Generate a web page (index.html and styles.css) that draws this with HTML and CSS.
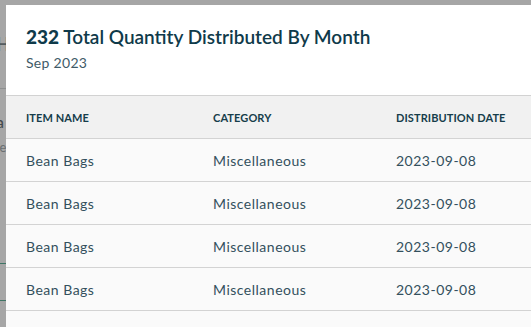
FILE: index.html
```html
<!DOCTYPE html>
<html>
<head>
<meta charset="utf-8">
<link rel="stylesheet" href="styles.css">
</head>
<body>
<div class="page">
  <div class="bg-h">H</div>
  <div class="bg-rule"></div>
  <div class="bg-a">a</div>
  <div class="bg-re">re</div>
  <div class="bg-green g1"></div>
  <div class="bg-green g2"></div>
</div>
<div class="modal">
  <div class="modal-head">
    <h1 class="title"><strong>232</strong> Total Quantity Distributed By Month</h1>
    <div class="subtitle">Sep 2023</div>
  </div>
  <table class="grid">
    <thead>
      <tr><th class="c1">Item Name</th><th class="c2">Category</th><th>Distribution Date</th></tr>
    </thead>
    <tbody>
      <tr><td>Bean Bags</td><td>Miscellaneous</td><td>2023-09-08</td></tr>
      <tr><td>Bean Bags</td><td>Miscellaneous</td><td>2023-09-08</td></tr>
      <tr><td>Bean Bags</td><td>Miscellaneous</td><td>2023-09-08</td></tr>
      <tr><td>Bean Bags</td><td>Miscellaneous</td><td>2023-09-08</td></tr>
      <tr><td>Bean Bags</td><td>Miscellaneous</td><td>2023-09-08</td></tr>
    </tbody>
  </table>
</div>
</body>
</html>
```
FILE: styles.css
```css
html, body {
  margin: 0;
  padding: 0;
  width: 531px;
  height: 327px;
  overflow: hidden;
  background: #a6a6a6;
  font-family: Lato, "Liberation Sans", sans-serif;
}
.page {
  position: relative;
  height: 327px;
  color: #4a5559;
}
.bg-h { position: absolute; left: -4px; top: 33px; font-size: 18px; font-weight: 700; color: #545c5f; }
.bg-rule { position: absolute; left: 0; top: 88px; width: 6px; height: 1px; background: #8e9090; }
.bg-a { position: absolute; left: -4px; top: 112px; font-size: 16px; color: #42494b; }
.bg-re { position: absolute; left: -5px; top: 139px; font-size: 13px; color: #6a6f71; }
.bg-green { position: absolute; left: 0; width: 6px; height: 1px; background: #3f7565; }
.g1 { top: 263px; }
.g2 { top: 300px; }

.modal {
  position: absolute;
  left: 6px;
  top: 5px;
  right: 0;
  bottom: 0;
  background: #ffffff;
  color: #123d4c;
  overflow: hidden;
}
.modal-head {
  padding: 20px 20px 23px;
  border-bottom: 1px solid #d2d2d2;
}
.title {
  margin: 0;
  font-size: 19px;
  line-height: 24px;
  font-weight: 600;
  color: #0f3a4a;
}
.title strong { font-weight: 900; }
.subtitle {
  margin-top: 5px;
  font-size: 14px;
  line-height: 18px;
  letter-spacing: 0.3px;
  color: #3f5b68;
}
.grid {
  border-collapse: collapse;
  width: 100%;
}
.grid th {
  background: #f1f1f1;
  text-align: left;
  font-size: 11px;
  font-weight: 700;
  text-transform: uppercase;
  letter-spacing: 0.1px;
  color: #163d4b;
  height: 42px;
  padding: 0 0 0 20px;
  border-bottom: 1px solid #d3d3d3;
}
.grid th.c1 { width: 167px; }
.grid th.c2 { width: 163px; }
.grid td {
  background: #fafafa;
  font-size: 14px;
  letter-spacing: 0.5px;
  color: #33505d;
  height: 42px;
  padding: 0 0 0 20px;
  border-bottom: 1px solid #d3d3d3;
}
```
